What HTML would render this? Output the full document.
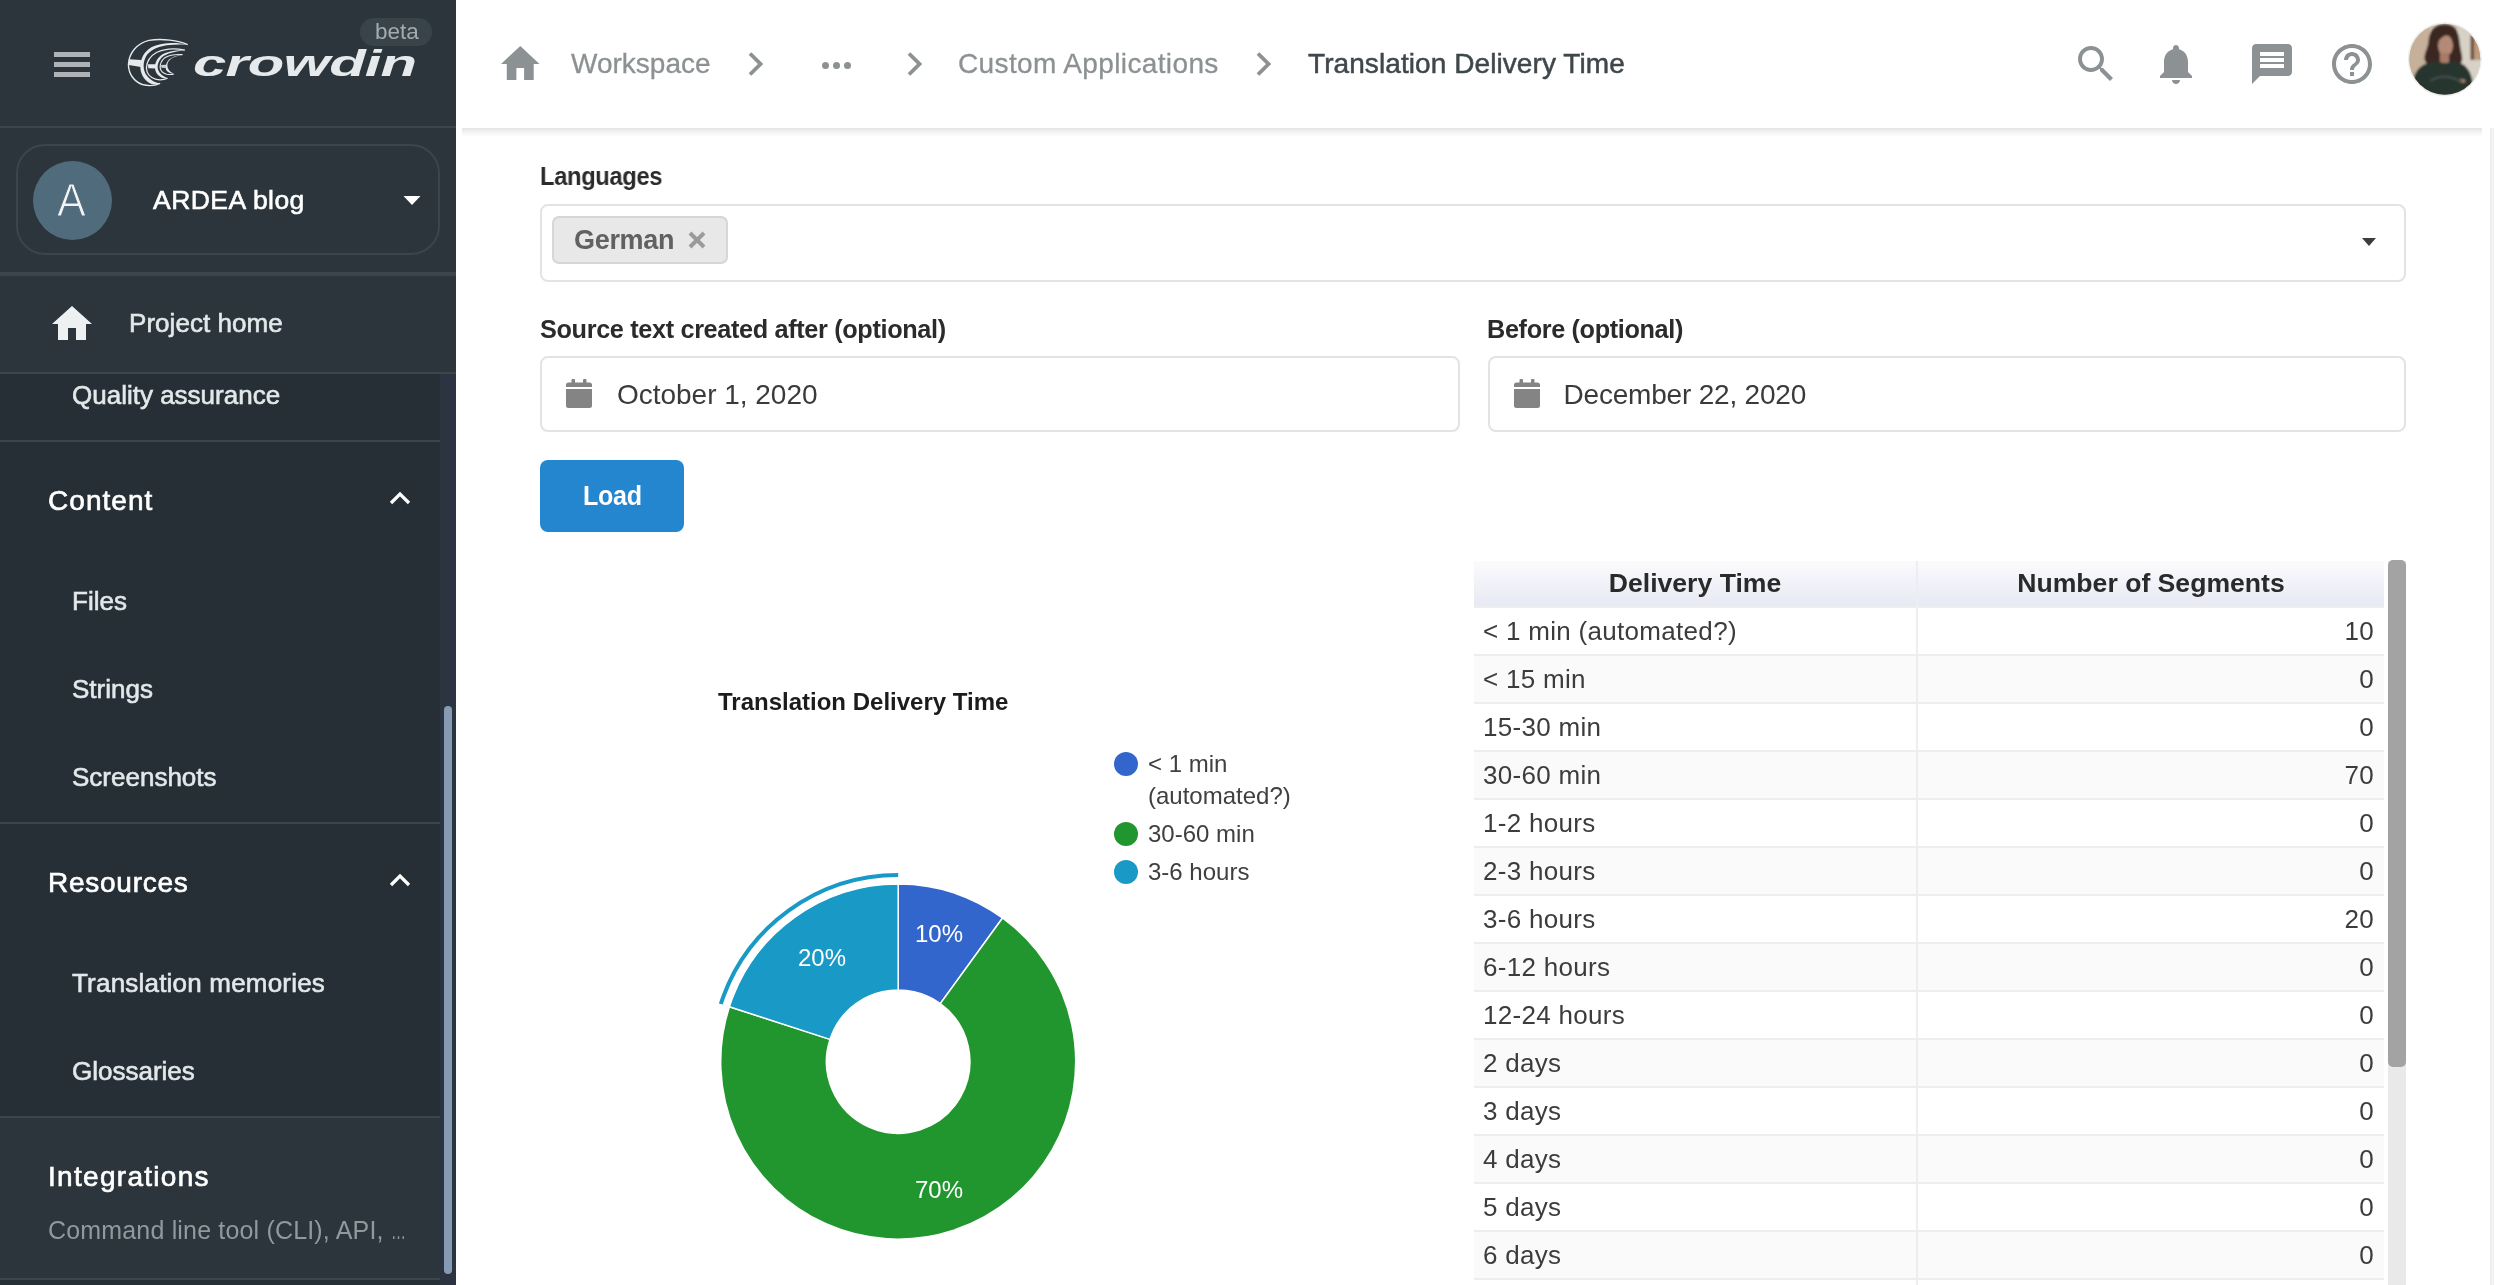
<!DOCTYPE html>
<html lang="en">
<head>
<meta charset="utf-8">
<title>Translation Delivery Time</title>
<style>
*{box-sizing:border-box;margin:0;padding:0}
html,body{width:2494px;height:1285px;overflow:hidden;background:#fff}
body{position:relative;font-family:"Liberation Sans",sans-serif;color:#333}
.abs{position:absolute}
.t{position:absolute;white-space:nowrap;line-height:1}
#side,#top,#content{will-change:transform}
/* ---------- sidebar ---------- */
#side{position:absolute;left:0;top:0;width:456px;height:1285px;background:#2b353b;overflow:hidden}
#side .hr{position:absolute;left:0;background:#3a464c}
#scrollbg{position:absolute;left:0;top:374px;width:440px;height:911px;background:#252f35}
#track{position:absolute;left:440px;top:374px;width:16px;height:911px;background:#2b3440}
#thumb{position:absolute;left:444px;top:706px;width:8px;height:568px;border-radius:4px;background:#869bb3}
.nav{position:absolute;white-space:nowrap;line-height:1;color:#e3e8ea;font-size:26px;letter-spacing:0;font-weight:400;-webkit-text-stroke:.6px #e3e8ea}
.sec{position:absolute;white-space:nowrap;line-height:1;color:#fff;font-size:28px;letter-spacing:1.3px;-webkit-text-stroke:.65px #fff}
/* ---------- top bar ---------- */
#top{position:absolute;left:456px;top:0;width:2038px;height:128px;background:#fff}
#topsh{position:absolute;left:462px;top:128px;width:2020px;height:9px;background:linear-gradient(rgba(0,0,0,.1),rgba(0,0,0,.03) 60%,rgba(0,0,0,0))}
.bc{position:absolute;white-space:nowrap;line-height:1;font-size:28px;color:#8c9193;top:50px;letter-spacing:0;-webkit-text-stroke:.3px #8c9193}
/* ---------- content ---------- */
.lbl{position:absolute;white-space:nowrap;line-height:1;font-size:25px;font-weight:700;color:#2b2b2b;letter-spacing:-.35px}
.box{position:absolute;border:2px solid #e2e3e4;border-radius:8px;background:#fff}
.val{position:absolute;white-space:nowrap;line-height:1;font-size:28px;color:#3a3a3a;letter-spacing:-.3px}
/* table */
#tbl{position:absolute;left:1474px;top:561px;width:910px;border-collapse:collapse;font-size:26px;color:#3c3c3c}
#tbl th{height:46px;font-weight:700;color:#2a2a2a;text-align:center;background:linear-gradient(#fbfbfd,#e7e9f3);border-right:2px solid #eceef4;font-size:26.6px}
#tbl td{height:48px;border-top:2px solid #eee;border-right:2px solid #eee;padding:0 9px;letter-spacing:.3px}
#tbl td:last-child,#tbl th:last-child{border-right:none}
#tbl td+td{text-align:right;padding-right:10px}
#tbl tr:nth-child(odd) td{background:#fafafa}
</style>
</head>
<body>

<!-- ================= SIDEBAR ================= -->
<div id="side">
  <div id="scrollbg"></div>
  <div id="track"></div>
  <div id="thumb"></div>
  <!-- hamburger -->
  <div class="abs" style="left:54px;top:52px;width:36px;height:4.500px;background:#adb3b6"></div>
  <div class="abs" style="left:54px;top:62px;width:36px;height:4.500px;background:#adb3b6"></div>
  <div class="abs" style="left:54px;top:72px;width:36px;height:4.500px;background:#adb3b6"></div>
  <!-- logo swirl -->
  <svg class="abs" style="left:120px;top:32px" width="80" height="60" viewBox="0 0 1713 1285" fill="none">
    <path d="M1450 270 C1250 180 900 135 620 180 C360 245 190 450 180 700 C185 900 300 1060 480 1125 C620 1165 760 1145 860 1100" stroke="#e6eaec" stroke-width="30"/>
    <path d="M1450 272 C1200 215 900 220 680 320 C500 420 430 600 435 760 C445 930 540 1060 680 1115 C740 1130 800 1120 860 1100 C730 1085 620 1010 550 900 C490 790 490 640 560 520 C640 390 800 320 1000 285 C1150 265 1300 262 1450 272Z" fill="#e6eaec"/>
    <path d="M1390 388 C1200 350 950 360 780 440 C640 520 570 650 565 770 C570 880 640 970 760 1010 C860 1035 950 1020 1020 990" stroke="#e6eaec" stroke-width="27"/>
    <path d="M1390 395 C1200 385 1000 420 880 500 C780 580 745 680 750 780 C760 880 830 950 920 985 C960 995 990 995 1020 990 C930 960 850 900 815 810 C790 720 820 620 900 540 C1000 455 1180 410 1390 395Z" fill="#e6eaec"/>
    <path d="M1340 485 C1200 475 1050 500 960 550 C890 610 855 690 860 770 C870 840 920 885 1000 905 C1060 912 1110 910 1150 903" stroke="#e6eaec" stroke-width="25"/>
    <path d="M1340 490 C1230 490 1120 530 1050 590 C985 660 965 740 985 810 C1010 860 1070 890 1150 892 C1090 865 1040 820 1020 760 C1000 690 1030 620 1100 570 C1170 525 1250 500 1340 490Z" fill="#e6eaec"/>
    <path d="M195 585 L450 598 L445 752 L190 705Z" fill="#e6eaec"/>
    <path d="M600 692 L765 690 L760 782 L605 775Z" fill="#e6eaec"/>
    <path d="M880 705 L990 700 L992 772 L885 768Z" fill="#cdd3d6"/>
  </svg>
  <!-- wordmark -->
  <div class="t" id="wm" style="left:193px;top:46px;font-size:36px;font-weight:700;font-style:italic;color:#e6eaec;transform-origin:0 0;transform:scaleX(1.66);letter-spacing:-.5px">crowdin</div>
  <!-- beta -->
  <div class="abs" style="left:360px;top:18px;width:72px;height:28px;border-radius:14px;background:#38444a"></div>
  <div class="t" style="left:375px;top:21px;font-size:22.500px;color:#a3abaf;letter-spacing:0">beta</div>
  <div class="hr" style="top:126px;width:456px;height:2px"></div>

  <!-- project selector -->
  <div class="abs" style="left:16px;top:144px;width:424px;height:111px;border:2px solid #3a464c;border-radius:29px"></div>
  <div class="abs" style="left:32.500px;top:161px;width:79px;height:79px;border-radius:50%;background:#506c7c"></div>
  <div class="t" style="left:55.500px;top:177px;font-size:46px;color:#f2f4f5;font-weight:400;transform:scaleX(.94);-webkit-text-stroke:1px #506c7c">A</div>
  <div class="t" style="left:153px;top:187px;font-size:26.500px;color:#fff;-webkit-text-stroke:.6px #fff;letter-spacing:.45px">ARDEA blog</div>
  <svg class="abs" style="left:403px;top:196px" width="18" height="9" viewBox="0 0 18 9"><path d="M0.500 0 L17.500 0 L9 9Z" fill="#fff"/></svg>
  <div class="hr" style="top:272px;width:456px;height:4px"></div>

  <!-- project home -->
  <svg class="abs" style="left:52px;top:306px" width="40" height="34" viewBox="0 0 40 34"><path d="M16 34V22h8v12h10V18h6L20 0 0 18h6v16z" fill="#eef1f2"/></svg>
  <div class="nav" style="left:129px;top:310px;letter-spacing:.05px">Project home</div>
  <div class="hr" style="top:372px;width:456px;height:2px"></div>

  <div class="nav" style="left:72px;top:382px">Quality assurance</div>
  <div class="hr" style="top:440px;width:440px;height:2px"></div>

  <div class="sec" style="left:48px;top:487px;letter-spacing:1.05px">Content</div>
  <svg class="abs" style="left:389px;top:491px" width="22" height="14" viewBox="0 0 22 14"><path d="M2 12 L11 3 L20 12" stroke="#fff" stroke-width="3.200" fill="none"/></svg>
  <div class="nav" style="left:72px;top:588px">Files</div>
  <div class="nav" style="left:72px;top:676px">Strings</div>
  <div class="nav" style="left:72px;top:764px">Screenshots</div>
  <div class="hr" style="top:822px;width:440px;height:2px"></div>

  <div class="sec" style="left:48px;top:869px;letter-spacing:.75px">Resources</div>
  <svg class="abs" style="left:389px;top:873px" width="22" height="14" viewBox="0 0 22 14"><path d="M2 12 L11 3 L20 12" stroke="#fff" stroke-width="3.200" fill="none"/></svg>
  <div class="nav" style="left:72px;top:970px;letter-spacing:.2px">Translation memories</div>
  <div class="nav" style="left:72px;top:1058px">Glossaries</div>
  <div class="hr" style="top:1116px;width:440px;height:2px"></div>

  <div class="abs" style="left:0;top:1118px;width:440px;height:160px;background:#2b353b"></div>
  <div class="sec" style="left:48px;top:1163px">Integrations</div>
  <div class="t" style="left:48px;top:1218px;font-size:25px;color:#8f999e;letter-spacing:.17px">Command line tool (CLI), API, <span style="display:inline-block;transform:scaleX(.6);transform-origin:0 50%">…</span></div>
  <div class="hr" style="top:1278px;width:440px;height:2px"></div>
</div>

<!-- ================= TOP BAR ================= -->
<div id="topsh"></div>
<div id="top">
  <svg class="abs" style="left:45px;top:46px" width="38.500" height="34" viewBox="0 0 40 34" preserveAspectRatio="none"><path d="M16 34V22h8v12h10V18h6L20 0 0 18h6v16z" fill="#8c9193"/></svg>
  <div class="bc" style="left:115px">Workspace</div>
  <svg class="abs" style="left:291px;top:52px" width="16" height="24" viewBox="0 0 16 24"><path d="M3 1.500 L13.500 12 L3 22.500" stroke="#8c9193" stroke-width="3.800" fill="none"/></svg>
  <div class="abs" style="left:366px;top:62px;width:7px;height:7px;border-radius:50%;background:#8c9193;box-shadow:11px 0 0 #8c9193,22px 0 0 #8c9193"></div>
  <svg class="abs" style="left:450px;top:52px" width="16" height="24" viewBox="0 0 16 24"><path d="M3 1.500 L13.500 12 L3 22.500" stroke="#8c9193" stroke-width="3.800" fill="none"/></svg>
  <div class="bc" style="left:502px;letter-spacing:.37px">Custom Applications</div>
  <svg class="abs" style="left:799px;top:52px" width="16" height="24" viewBox="0 0 16 24"><path d="M3 1.500 L13.500 12 L3 22.500" stroke="#8c9193" stroke-width="3.800" fill="none"/></svg>
  <div class="bc" style="left:852px;color:#3f474b;-webkit-text-stroke:.5px #3f474b;letter-spacing:.08px">Translation Delivery Time</div>

  <!-- search -->
  <svg class="abs" style="left:1616px;top:40px" width="48" height="48" viewBox="0 0 24 24"><path d="M15.5 14h-.79l-.28-.27C15.41 12.59 16 11.11 16 9.5 16 5.910 13.090 3 9.500 3S3 5.910 3 9.500 5.910 16 9.500 16c1.610 0 3.090-.590 4.230-1.570l.27.28v.79l5 4.990L20.490 19l-4.990-5zm-6 0C7.010 14 5 11.990 5 9.500S7.010 5 9.500 5 14 7.010 14 9.500 11.990 14 9.500 14z" fill="#8c9193"/></svg>
  <!-- bell -->
  <svg class="abs" style="left:1696px;top:40px" width="48" height="48" viewBox="0 0 24 24"><path d="M12 22c1.100 0 2-.9 2-2h-4c0 1.100.890 2 2 2zm6-6v-5c0-3.070-1.640-5.640-4.500-6.320V4c0-.830-.670-1.500-1.500-1.500s-1.500.670-1.500 1.500v.680C7.630 5.360 6 7.920 6 11v5l-2 2v1h16v-1l-2-2z" fill="#8c9193"/></svg>
  <!-- chat -->
  <svg class="abs" style="left:1792px;top:40px" width="48" height="48" viewBox="0 0 24 24"><path d="M20 2H4c-1.100 0-1.990.9-1.990 2L2 22l4-4h14c1.100 0 2-.9 2-2V4c0-1.100-.9-2-2-2zM6 9h12v2H6V9zm12 5H6v-2h12v2zm0-6H6V6h12v2z" fill="#8c9193"/></svg>
  <!-- help -->
  <svg class="abs" style="left:1872px;top:40px" width="48" height="48" viewBox="0 0 24 24"><path d="M11 18h2v-2h-2v2zm1-16C6.480 2 2 6.480 2 12s4.480 10 10 10 10-4.480 10-10S17.520 2 12 2zm0 18c-4.410 0-8-3.590-8-8s3.590-8 8-8 8 3.590 8 8-3.590 8-8 8zm0-14c-2.210 0-4 1.790-4 4h2c0-1.100.9-2 2-2s2 .9 2 2c0 2-3 1.750-3 5h2c0-2.250 3-2.500 3-5 0-2.210-1.790-4-4-4z" fill="#8c9193"/></svg>
  <!-- avatar -->
  <svg class="abs" style="left:1944px;top:15px" width="90" height="90" viewBox="0 0 90 90">
    <defs>
      <clipPath id="avc"><circle cx="44.800" cy="44.200" r="35.500"/></clipPath>
      <filter id="avb" x="-20%" y="-20%" width="140%" height="140%"><feGaussianBlur stdDeviation="1.100"/></filter>
    </defs>
    <circle cx="44.800" cy="44.200" r="37" fill="#efecea"/>
    <g clip-path="url(#avc)">
      <rect x="0" y="0" width="90" height="90" fill="#cdbfad"/>
      <g filter="url(#avb)">
        <rect x="0" y="0" width="30" height="90" fill="#c6b09a"/>
        <rect x="58" y="0" width="32" height="90" fill="#d8d1c6"/>
        <rect x="70.500" y="20" width="4" height="25" fill="#6f4f3c"/>
        <rect x="74.500" y="24" width="8" height="21" fill="#bf9a7c"/>
        <path d="M45 9.500 C34 9.500 29 17 28.500 26 C28 33 24 38 24.500 44 C25 49 30 51 36 50 L56 50 C61 50 63 46 62 41 C61 35 60 31 59.500 26 C59 16 54 9.500 45 9.500Z" fill="#3b2720"/>
        <ellipse cx="45.500" cy="30.500" rx="7.500" ry="10.500" fill="#b48a77"/>
        <rect x="40" y="38" width="9" height="10" fill="#a67c69"/>
        <path d="M36 22 C38 14 50 13 55 21 C50 18.500 43 19 37 28Z" fill="#3b2720"/>
        <path d="M13 68 C14 55 22 47 38 46 L45 49 L52 46 C66 47 71 56 73 68 L70 90 L15 90Z" fill="#27342f"/>
        <ellipse cx="62" cy="66" rx="3.500" ry="2" fill="#a57a62"/>
        <path d="M30 66 C40 60 52 60 62 68" stroke="#3d4b46" stroke-width="2.500" fill="none"/>
      </g>
    </g>
  </svg>
</div>

<!-- ================= CONTENT ================= -->
<div id="content">
  <div class="lbl" style="left:540px;top:164px;transform:scaleX(.948);transform-origin:0 0">Languages</div>
  <div class="box" style="left:540px;top:204px;width:1866px;height:78px"></div>
  <div class="abs" style="left:552px;top:216px;width:176px;height:48px;border-radius:7px;background:#e8e8e8;border:2px solid #d6d6d6"></div>
  <div class="t" style="left:574px;top:227px;font-size:27px;font-weight:700;color:#616161;letter-spacing:-.3px">German</div>
  <svg class="abs" style="left:688px;top:231px" width="18" height="18" viewBox="0 0 18 18"><path d="M2 2 L16 16 M16 2 L2 16" stroke="#9a9a9a" stroke-width="4"/></svg>
  <svg class="abs" style="left:2362px;top:238px" width="14" height="8" viewBox="0 0 14 8"><path d="M0 0 H14 L7 8Z" fill="#3d3d3d"/></svg>

  <div class="lbl" style="left:540px;top:317px;transform:scaleX(1.011);transform-origin:0 0">Source text created after (optional)</div>
  <div class="lbl" style="left:1487px;top:317px;transform:scaleX(1.01);transform-origin:0 0">Before (optional)</div>
  <div class="box" style="left:540px;top:356px;width:920px;height:76px"></div>
  <div class="box" style="left:1488px;top:356px;width:918px;height:76px"></div>
  <svg class="abs cal" style="left:566px;top:378.500px" width="26" height="29" viewBox="0 0 26 29"><path d="M0 10 H26 V26.500 a2.500 2.500 0 0 1 -2.500 2.500 H2.500 a2.500 2.500 0 0 1 -2.500 -2.500Z M0 8 V6 a2.500 2.500 0 0 1 2.500 -2.500 H5.500 V1 a1 1 0 0 1 1 -1 h1.500 a1 1 0 0 1 1 1 V3.500 H17 V1 a1 1 0 0 1 1 -1 h1.500 a1 1 0 0 1 1 1 V3.500 H23.500 a2.500 2.500 0 0 1 2.500 2.500 V8Z" fill="#848484"/></svg>
  <svg class="abs cal" style="left:1514px;top:378.500px" width="26" height="29" viewBox="0 0 26 29"><path d="M0 10 H26 V26.500 a2.500 2.500 0 0 1 -2.500 2.500 H2.500 a2.500 2.500 0 0 1 -2.500 -2.500Z M0 8 V6 a2.500 2.500 0 0 1 2.500 -2.500 H5.500 V1 a1 1 0 0 1 1 -1 h1.500 a1 1 0 0 1 1 1 V3.500 H17 V1 a1 1 0 0 1 1 -1 h1.500 a1 1 0 0 1 1 1 V3.500 H23.500 a2.500 2.500 0 0 1 2.500 2.500 V8Z" fill="#848484"/></svg>
  <div class="val" style="left:617px;top:381px;letter-spacing:-.02px">October 1, 2020</div>
  <div class="val" style="left:1563.500px;top:381px;letter-spacing:-.2px">December 22, 2020</div>

  <div class="abs" style="left:540px;top:460px;width:144px;height:72px;border-radius:8px;background:#2386cf"></div>
  <div class="t" style="left:582.500px;top:483px;font-size:27px;font-weight:700;color:#fff;letter-spacing:-.3px;transform:scaleX(.93);transform-origin:0 0">Load</div>

  <!-- chart -->
  <div class="t" style="left:718px;top:690px;font-size:24px;font-weight:700;color:#1c1c1c">Translation Delivery Time</div>
  <svg class="abs" style="left:700px;top:740px" width="700" height="545" viewBox="700 740 700 545" font-family="Liberation Sans, sans-serif">
    <circle cx="1126" cy="764" r="12" fill="#3366cc"/>
    <circle cx="1126" cy="834" r="12" fill="#22962e"/>
    <circle cx="1126" cy="872" r="12" fill="#1899c6"/>
    <text x="1148" y="771.500" font-size="24" fill="#404040">&lt; 1 min</text>
    <text x="1148" y="803.500" font-size="24" fill="#404040">(automated?)</text>
    <text x="1148" y="841.500" font-size="24" fill="#404040">30-60 min</text>
    <text x="1148" y="879.500" font-size="24" fill="#404040">3-6 hours</text>
    <g id="pie">
    <path d="M898.2 884.1 A177.5 177.5 0 0 1 1002.5 918.0 L940.3 1003.6 A71.7 71.7 0 0 0 898.2 989.9Z" fill="#3366cc" stroke="#fff" stroke-width="1.500"/>
    <path d="M1002.5 918.0 A177.5 177.5 0 1 1 729.4 1006.7 L830.0 1039.4 A71.7 71.7 0 1 0 940.3 1003.6Z" fill="#22962e" stroke="#fff" stroke-width="1.500"/>
    <path d="M729.4 1006.7 A177.5 177.5 0 0 1 898.2 884.1 L898.2 989.9 A71.7 71.7 0 0 0 830.0 1039.4Z" fill="#1899c6" stroke="#fff" stroke-width="1.500"/>
    <path d="M720.8 1004.0 A186.5 186.5 0 0 1 898.2 875.1" fill="none" stroke="#1899c6" stroke-width="4"/>
    <text x="939" y="941.5" font-size="24" fill="#fff" text-anchor="middle">10%</text>
    <text x="939" y="1197.5" font-size="24" fill="#fff" text-anchor="middle">70%</text>
    <text x="822" y="965.5" font-size="24" fill="#fff" text-anchor="middle">20%</text>
    </g>
  </svg>

  <!-- table -->
  <table id="tbl">
    <tr><th style="width:443px">Delivery Time</th><th>Number of Segments</th></tr>
    <tr><td>&lt; 1 min (automated?)</td><td>10</td></tr>
    <tr><td>&lt; 15 min</td><td>0</td></tr>
    <tr><td>15-30 min</td><td>0</td></tr>
    <tr><td>30-60 min</td><td>70</td></tr>
    <tr><td>1-2 hours</td><td>0</td></tr>
    <tr><td>2-3 hours</td><td>0</td></tr>
    <tr><td>3-6 hours</td><td>20</td></tr>
    <tr><td>6-12 hours</td><td>0</td></tr>
    <tr><td>12-24 hours</td><td>0</td></tr>
    <tr><td>2 days</td><td>0</td></tr>
    <tr><td>3 days</td><td>0</td></tr>
    <tr><td>4 days</td><td>0</td></tr>
    <tr><td>5 days</td><td>0</td></tr>
    <tr><td>6 days</td><td>0</td></tr>
    <tr><td>7 days</td><td>0</td></tr>
  </table>
  <div class="abs" style="left:2388px;top:561px;width:18px;height:724px;background:#e9e9e9"></div>
  <div class="abs" style="left:2388px;top:560px;width:18px;height:507px;border-radius:5px;background:#a3a3a3"></div>
  <!-- page scrollbar strip -->
  <div class="abs" style="left:2490px;top:128px;width:4px;height:1157px;background:linear-gradient(90deg,#e9e9e9,#f3f3f3 50%,#f1f1f1)"></div>
</div>

</body>
</html>
